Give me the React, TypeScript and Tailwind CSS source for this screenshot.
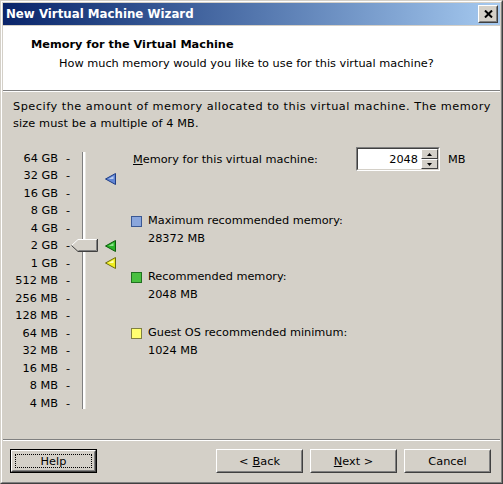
import React from "react";

const ROW_H = 17.5;
const labels = ["64 GB","32 GB","16 GB","8 GB","4 GB","2 GB","1 GB","512 MB","256 MB","128 MB","64 MB","32 MB","16 MB","8 MB","4 MB"];

function rowCenter(mb: number) {
  const idx = 16 - Math.log2(mb);
  return idx * ROW_H + ROW_H / 2;
}

function Arrow({ mb, fill, light, dark }: { mb: number; fill: string; light: string; dark: string }) {
  const c = rowCenter(mb);
  return (
    <svg
      className="absolute"
      style={{ left: 35, top: c - 6 }}
      width="12"
      height="12"
      viewBox="0 0 12 12"
    >
      <polygon points="0.5,6 10.5,0.5 10.5,11.5" fill={fill} stroke={dark} strokeWidth="1" />
      <polygon points="3.5,6 8.5,3 8.5,6" fill={light} />
    </svg>
  );
}

function Btn({ children, def }: { children: React.ReactNode; def?: boolean }) {
  const inner = (
    <div className="h-full w-full border border-t-white border-l-white border-b-[#404040] border-r-[#404040]">
      <div className="h-full w-full border border-t-[#d4d0c8] border-l-[#d4d0c8] border-b-[#808080] border-r-[#808080] flex items-center justify-center p-[2px]">
        <div className={"h-full w-full flex items-center justify-center " + (def ? "border border-dotted border-black" : "")}>
          {children}
        </div>
      </div>
    </div>
  );
  return (
    <div className={"w-[87px] h-[24px] " + (def ? "border border-black" : "")}>{inner}</div>
  );
}

function Square({ color, border }: { color: string; border: string }) {
  return (
    <div className="w-[11px] h-[11px] mt-[3.5px] shrink-0 border" style={{ background: color, borderColor: border }} />
  );
}

export default function App() {
  return (
    <div className="w-[503px] h-[484px] bg-[#d4d0c8] font-['DejaVu_Sans',sans-serif] text-[11.3px] text-black leading-[17px]">
      <div className="w-full h-full border border-t-[#d4d0c8] border-l-[#d4d0c8] border-b-[#404040] border-r-[#404040]">
        <div className="w-full h-full border border-t-white border-l-white border-b-[#808080] border-r-[#808080] p-px flex flex-col">
          {/* Title bar */}
          <div className="h-[22px] shrink-0 flex items-center pl-[3px] pr-[2px] bg-gradient-to-r from-[#0a246a] to-[#a6caf0]">
            <span className="text-white font-bold text-[11.8px] flex-1">New Virtual Machine Wizard</span>
            <div className="w-[20px] h-[18px] border border-t-white border-l-white border-b-[#404040] border-r-[#404040] bg-[#d4d0c8]">
              <div className="w-full h-full border border-t-[#d4d0c8] border-l-[#d4d0c8] border-b-[#808080] border-r-[#808080] flex items-center justify-center">
                <svg width="9" height="8" viewBox="0 0 9 8">
                  <path d="M1 0.5 L8 7.5 M8 0.5 L1 7.5" stroke="#000" strokeWidth="2" />
                </svg>
              </div>
            </div>
          </div>
          <div className="h-px shrink-0" />
          {/* Header */}
          <div className="h-[64px] shrink-0 bg-white pt-[9.5px]">
            <div className="pl-[28px] font-bold">Memory for the Virtual Machine</div>
            <div className="pl-[56px] mt-[2px]">How much memory would you like to use for this virtual machine?</div>
          </div>
          <div className="h-px shrink-0 bg-[#808080]" />
          <div className="h-px shrink-0 bg-white" />
          {/* Body */}
          <div className="flex-1 px-[10px] pt-[5.5px]">
            <p className="whitespace-nowrap">
              <span className="tracking-[0.5px]">Specify the amount of memory allocated to this virtual machine. The memory</span>
              <br />
              <span className="tracking-[0.12px]">size must be a multiple of 4 MB.</span>
            </p>
            <div className="flex mt-[17.75px]">
              <div className="flex flex-col">
                {labels.map((l) => (
                  <div key={l} className="h-[17.5px] flex items-center">
                    <span className="w-[45px] text-right whitespace-nowrap">{l}</span>
                    <span className="w-[12px] pl-[8px]">-</span>
                  </div>
                ))}
              </div>
              <div className="relative w-[61px] flex flex-col pt-[3px] pb-[3px]">
                <div className="ml-[12px] w-[4px] flex-1 flex">
                  <div className="w-px bg-[#808080]" />
                  <div className="w-[2px] bg-white" />
                  <div className="w-px bg-[#e8e6e0]" />
                </div>
                {/* thumb */}
                <svg className="absolute" style={{ left: 1, top: rowCenter(2048) - 6.5 }} width="27" height="13" viewBox="0 0 27 13">
                  <polygon points="0.5,6.5 7,0.5 26,0.5 26,12.5 7,12.5" fill="#d4d0c8" />
                  <polyline points="0.5,6.5 7,0.5 25.5,0.5" fill="none" stroke="#ffffff" strokeWidth="1" />
                  <polyline points="0.5,6.5 7,12.5 26.5,12.5 26.5,0" fill="none" stroke="#404040" strokeWidth="1" />
                  <polyline points="7.5,11.5 25.5,11.5 25.5,1" fill="none" stroke="#808080" strokeWidth="1" />
                </svg>
                <Arrow mb={28372} fill="#6286d4" light="#b8ccf0" dark="#1f3d86" />
                <Arrow mb={2048} fill="#28b428" light="#8ee08e" dark="#0c5c0c" />
                <Arrow mb={1024} fill="#f0ee20" light="#ffffb0" dark="#6c6c10" />
              </div>
              <div className="flex-1 flex flex-col">
                <div className="flex items-center h-[24px] mt-[-2.25px]">
                  <span className="w-[225px] pl-[2px]">
                    <span className="underline">M</span>emory for this virtual machine:
                  </span>
                  <div className="w-[84px] h-[24px] border border-t-[#808080] border-l-[#808080] border-b-white border-r-white">
                    <div className="w-full h-full border border-t-[#404040] border-l-[#404040] border-b-[#d4d0c8] border-r-[#d4d0c8] bg-white flex">
                      <div className="flex-1 text-right pr-[3px] flex items-center justify-end">2048</div>
                      <div className="w-[17px] flex flex-col">
                        {[0, 1].map((i) => (
                          <div key={i} className="flex-1 border border-t-white border-l-white border-b-[#404040] border-r-[#404040] bg-[#d4d0c8] flex items-center justify-center">
                            <svg width="5" height="3" viewBox="0 0 5 3">
                              <polygon points={i === 0 ? "0,3 5,3 2.5,0" : "0,0 5,0 2.5,3"} fill="#000" />
                            </svg>
                          </div>
                        ))}
                      </div>
                    </div>
                  </div>
                  <span className="ml-[8px]">MB</span>
                </div>
                <div className="mt-[41px] flex flex-col gap-[20px] leading-[18px]">
                  <div className="flex gap-[6px]">
                    <Square color="#8aa6dc" border="#3a5894" />
                    <div>
                      <div>Maximum recommended memory:</div>
                      <div>28372 MB</div>
                    </div>
                  </div>
                  <div className="flex gap-[6px]">
                    <Square color="#48c040" border="#207020" />
                    <div>
                      <div>Recommended memory:</div>
                      <div>2048 MB</div>
                    </div>
                  </div>
                  <div className="flex gap-[6px]">
                    <Square color="#ffff70" border="#808040" />
                    <div>
                      <div>Guest OS recommended minimum:</div>
                      <div>1024 MB</div>
                    </div>
                  </div>
                </div>
              </div>
            </div>
          </div>
          {/* Bottom */}
          <div className="h-px shrink-0 bg-[#808080]" />
          <div className="h-px shrink-0 bg-white" />
          <div className="h-[40px] shrink-0 flex pt-[8px] pl-[7px] pr-[9px]">
            <Btn def>Help</Btn>
            <div className="flex-1" />
            <div className="flex gap-[7px]">
              <Btn>&lt; <span className="underline ml-[4px]">B</span>ack</Btn>
              <Btn><span className="underline">N</span>ext &gt;</Btn>
              <Btn>Cancel</Btn>
            </div>
          </div>
        </div>
      </div>
    </div>
  );
}
